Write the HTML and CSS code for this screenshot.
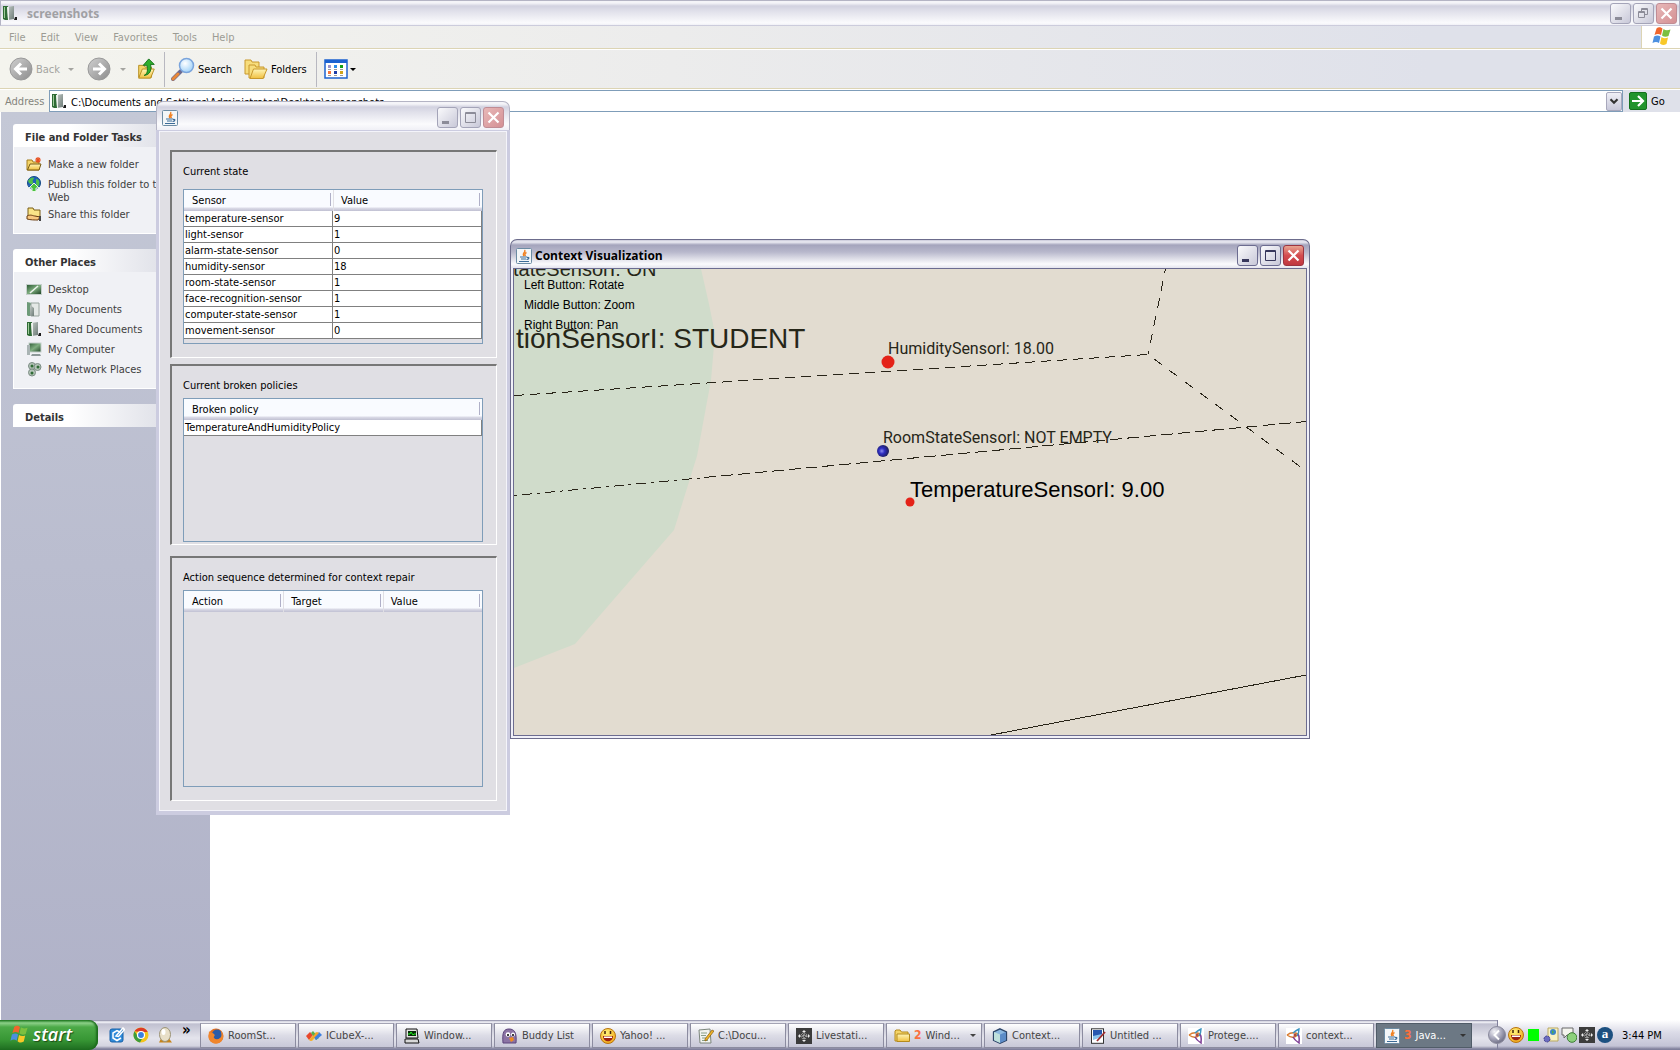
FILE: index.html
```html
<!DOCTYPE html>
<html lang="en">
<head>
<meta charset="utf-8">
<title>screenshots</title>
<link rel="stylesheet" href="styles.css">
</head>
<body>
<svg class="defs" aria-hidden="true">
  <defs>
    <linearGradient id="g-steel" x1="0" y1="0" x2="1" y2="1"><stop offset="0" stop-color="#c4ccc8"/><stop offset="1" stop-color="#6c7a76"/></linearGradient>
    <linearGradient id="g-green" x1="0" y1="0" x2="1" y2="1"><stop offset="0" stop-color="#2c5a34"/><stop offset=".5" stop-color="#7fae80"/><stop offset="1" stop-color="#1f4526"/></linearGradient>
    <linearGradient id="g-folder" x1="0" y1="0" x2="0" y2="1"><stop offset="0" stop-color="#fff6b8"/><stop offset="1" stop-color="#f0c040"/></linearGradient>
    <linearGradient id="g-gray" x1="0" y1="0" x2="1" y2="1"><stop offset="0" stop-color="#d0d0d0"/><stop offset="1" stop-color="#8c8c8c"/></linearGradient>
    <radialGradient id="g-lens" cx=".4" cy=".35" r=".7"><stop offset="0" stop-color="#ffffff"/><stop offset="1" stop-color="#9cd0f8"/></radialGradient>
    <radialGradient id="g-smile" cx=".4" cy=".3" r=".8"><stop offset="0" stop-color="#fff27a"/><stop offset="1" stop-color="#f0a010"/></radialGradient>
    <radialGradient id="g-ball" cx=".4" cy=".5" r=".6"><stop offset="0" stop-color="#8c8cf0"/><stop offset=".4" stop-color="#2e2ec0"/><stop offset="1" stop-color="#1c1c50"/></radialGradient>
    <radialGradient id="g-chev" cx=".35" cy=".3" r=".8"><stop offset="0" stop-color="#f4f4f8"/><stop offset=".5" stop-color="#a8a8bc"/><stop offset="1" stop-color="#606078"/></radialGradient>
  </defs>
  <symbol id="books" viewBox="0 0 16 16"><path d="M1 1h5v14H3l-2-1z" fill="#2f6b35"/><path d="M2 2h1v11H2z" fill="#9ecb9a"/><path d="M5 2l7-1v13l-6 1z" fill="url(#g-steel)"/><path d="M5 2l2 0v13H6z" fill="#eef2ee"/><path d="M13 12h2v3h-3z" fill="#1c1c1c"/></symbol>
  <symbol id="docs" viewBox="0 0 16 16"><path d="M1 1l5 1v13H2l-1-1z" fill="#6d9a78"/><path d="M5 2h8v13H5z" fill="#e4e8e6" stroke="#98a49e"/><path d="M4 4l4 3v8H4z" fill="url(#g-steel)"/></symbol>
  <symbol id="java" viewBox="0 0 16 16"><rect x=".5" y=".5" width="15" height="15" rx="1" fill="#f3f6f8" stroke="#6c8ca4"/><path d="M8.500 2c2 2-3 3-.5 6M10.500 4.500c-2 1-2 2-1 3.500" fill="none" stroke="#f08020" stroke-width="1.400"/><path d="M4 9h7M5 11h5M3 13.500h10M11 9.500c3-.5 2 2-.5 2" fill="none" stroke="#3c6c98" stroke-width="1.200"/></symbol>
  <symbol id="flag" viewBox="0 0 20 20"><path d="M4.500 2.500c3-2 4-1 6 0L9 9c-2-1.500-4-1.500-6.500 0z" fill="#f0662c"/><path d="M11.500 3c2 1.500 4 1.500 7 .5L16.500 10c-2 1-4.500 1-6.500-.5z" fill="#7cc040"/><path d="M2 10.500c2.500-1.500 4.500-1.500 6.500 0L7 17c-2-1.500-4-1.500-6.500 0z" fill="#4c90e0"/><path d="M9.500 11c2 1.500 4 1.500 6.500.5L14.500 18c-3 1.500-5 1-6.500-.5z" fill="#f8c828"/></symbol>
  <symbol id="folder" viewBox="0 0 16 16"><path d="M1 3l1-1h4l1.500 2H14v9H1z" fill="#f4d468" stroke="#b48a1c"/><path d="M3 6h12.500v7.500H3z" fill="url(#g-folder)" stroke="#b48a1c"/></symbol>
  <symbol id="newfolder" viewBox="0 0 16 16"><path d="M1 4h5l1 2h6v8H1z" fill="#f4d468" stroke="#a47c1c"/><path d="M1.500 14L4 8h11l-2 6z" fill="url(#g-folder)" stroke="#7a5c14"/><path d="M12 1v6M9 4h6M10 2l4 4M14 2l-4 4" stroke="#e85020" stroke-width="1.200"/></symbol>
  <symbol id="globe" viewBox="0 0 16 16"><circle cx="8" cy="7" r="6.500" fill="#2060b8" stroke="#134a86"/><path d="M2 5c2-4 6-4 6-3s-2 2-1 4-3 4-5-1zM10 3c3 0 4 3 3 6s-3 0-3-2z" fill="#4fc04a"/><path d="M8 7l5 5h-3v3.500H6V12H3z" fill="#4cc040" stroke="#e8f8e8"/></symbol>
  <symbol id="sharefolder" viewBox="0 0 16 16"><path d="M2 2h5l1 2h6v7H2z" fill="#f9e487" stroke="#7a5c14"/><path d="M1 10c4-2 6 0 8 0l5 1-2 3c-4 0-7 0-11-1z" fill="#f8c880" stroke="#6a3c10"/><path d="M13 10h2v5h-2z" fill="#444"/></symbol>
  <symbol id="desk" viewBox="0 0 16 16"><rect x="0" y="3" width="16" height="11" fill="#c6d0cc"/><rect x="1" y="4" width="14" height="9" fill="url(#g-green)"/><path d="M4 12l8-7" stroke="#eef4ee" stroke-width="1.500"/></symbol>
  <symbol id="pc" viewBox="0 0 16 16"><rect x="3" y="2" width="12" height="9" fill="url(#g-green)" stroke="#c4d0cc"/><path d="M1 4h3v10H1z" fill="#aab4b4"/><path d="M6 13h8l1 2H5z" fill="#8c9898"/></symbol>
  <symbol id="net" viewBox="0 0 16 16"><g stroke="#7c8c84" fill="#b4c4b8"><circle cx="6" cy="5" r="3.500"/><circle cx="11.500" cy="6" r="3.500"/><circle cx="6" cy="11.500" r="3.500"/></g><circle cx="6" cy="5" r="1.500" fill="#2f6b35"/><circle cx="12" cy="6" r="1.500" fill="#2f6b35"/><circle cx="6" cy="12" r="1.500" fill="#2f6b35"/></symbol>
  <symbol id="back" viewBox="0 0 24 24"><circle cx="12" cy="12" r="11" fill="url(#g-gray)" stroke="#9a9a9a"/><path d="M18 12H7M12 6.500L6.500 12l5.500 5.500" fill="none" stroke="#fff" stroke-width="3"/></symbol>
  <symbol id="fwd" viewBox="0 0 24 24"><circle cx="12" cy="12" r="11" fill="url(#g-gray)" stroke="#9a9a9a"/><path d="M6 12h11M12 6.500l5.500 5.500-5.500 5.500" fill="none" stroke="#fff" stroke-width="3"/></symbol>
  <symbol id="up" viewBox="0 0 20 24"><path d="M2 8h6l1 2h7v11H2z" fill="#f4d468" stroke="#b48a1c"/><path d="M2 22l4-10h13l-4 10z" fill="url(#g-folder)" stroke="#b48a1c"/><path d="M8 19c4-2 4-6 3-11H7l6-7 6 6h-4c1 6 0 11-7 12z" fill="#2fae2c" stroke="#14701a"/></symbol>
  <symbol id="lens" viewBox="0 0 24 24"><path d="M2 22l8-8" stroke="#6a6a90" stroke-width="4" stroke-linecap="round"/><path d="M2 22l5-5" stroke="#e88838" stroke-width="3" stroke-linecap="round"/><circle cx="15.500" cy="8.500" r="7" fill="url(#g-lens)" stroke="#7aa4dc" stroke-width="1.500"/></symbol>
  <symbol id="folders" viewBox="0 0 24 22"><path d="M1 2h6l1 2h7v12H1z" fill="#f7dd7c" stroke="#c8982c"/><path d="M5 7h6l1 2h8v11H5z" fill="#f7dd7c" stroke="#c8982c"/><path d="M6 20.500L9.500 11H23l-4 9.500z" fill="url(#g-folder)" stroke="#c8982c"/></symbol>
  <symbol id="views" viewBox="0 0 24 20"><rect x="1" y="1" width="22" height="18" fill="#fff" stroke="#1c62d0" stroke-width="1.500"/><path d="M1 1h22v3H1z" fill="#1c62d0"/><path d="M4 6h3v3H4z" fill="#9c94cc"/><path d="M10 6h3v3h-3z" fill="#2c8ce8"/><path d="M16 6h3v3h-3z" fill="#12a012"/><path d="M4 12h3v3H4z" fill="#f4743c"/><path d="M10 12h3v3h-3z" fill="#1c3ca8"/><path d="M16 12h3v3h-3z" fill="#d0a41c"/><path d="M4 10.500h3m3 0h3m3 0h3M4 16.500h3m3 0h3m3 0h3" stroke="#999"/></symbol>
  <symbol id="ie" viewBox="0 0 16 16"><rect x="1" y="2" width="13" height="13" rx="2" fill="#2f8ad8" stroke="#1660a8"/><path d="M11.500 5.500L8 3.500 4 6v5l4 2.500 4-2.500M7 9l7-8 1.500 1.500-6 7z" fill="none" stroke="#fff" stroke-width="1.500"/></symbol>
  <symbol id="chrome" viewBox="0 0 16 16"><circle cx="8" cy="8" r="7.500" fill="#f4c41c"/><path d="M1.500 4.200a7.500 7.500 0 0 1 13.200.8H8z" fill="#dc3a28"/><path d="M1.500 4.200a7.500 7.500 0 0 0 5.500 11.200L9.500 11 5 9.500z" fill="#3c9c3c"/><circle cx="8" cy="8" r="3.500" fill="#3a80e0" stroke="#fff" stroke-width="1.200"/></symbol>
  <symbol id="egg" viewBox="0 0 16 16"><path d="M2 15.500l2-4h8l3 4z" fill="#c88418"/><ellipse cx="8" cy="7.500" rx="5.500" ry="7" fill="#e8dfc8" stroke="#9c9478"/><ellipse cx="6.500" cy="5" rx="2" ry="3" fill="#fff"/></symbol>
  <symbol id="firefox" viewBox="0 0 16 16"><circle cx="8" cy="8" r="7.500" fill="#e8701c"/><circle cx="9" cy="6.500" r="5" fill="#2c5ca8"/><path d="M1 3c1 2 3 1 5 3s-1 2 0 4 5 2 7-1c1-2 0-5 0-6 3 3 3 9-1 11.500S1 15 .5 9z" fill="#f0862c"/></symbol>
  <symbol id="icube" viewBox="0 0 16 16"><path d="M0 8l4-4 3 3-4 5z" fill="#e8482c"/><path d="M3 12l7-8 3 2-7 7z" fill="#f4c42c"/><path d="M5 5l2-2 6 7-3 2z" fill="#58b04c"/><path d="M10 12l6-5-3-3-5 5z" fill="#3c80e0"/><path d="M3 12l8-8 2 1-8 8z" fill="#f4a42c"/></symbol>
  <symbol id="oldpc" viewBox="0 0 16 16"><path d="M2 1h11l1 9H2z" fill="#e4e4e4" stroke="#111"/><path d="M4 3h8v5H4z" fill="#0a2a0a"/><path d="M4 6h2l1-2 2 3 1-1h2" stroke="#20f020" fill="none"/><path d="M1 11h13l1 4H1z" fill="#d8d8d8" stroke="#111"/></symbol>
  <symbol id="bird" viewBox="0 0 16 16"><path d="M1 15C0 4 2 1 7 1s8 3 7 14z" fill="#8c74a4" stroke="#5c447c"/><circle cx="6" cy="6.500" r="2.300" fill="#fff"/><circle cx="11" cy="6.500" r="2" fill="#fff"/><circle cx="6" cy="7" r="1"/><circle cx="11" cy="7" r="1"/><path d="M7 10l4-1 1 3-3 2z" fill="#f08c20"/></symbol>
  <symbol id="smile" viewBox="0 0 16 16"><circle cx="8" cy="8" r="7.500" fill="url(#g-smile)" stroke="#b87410"/><path d="M3 8h10c0 7-10 7-10 0z" fill="#9c2010"/><path d="M4 8.500h8v1.500H4z" fill="#fff"/><path d="M5 3v3M10.500 3v3" stroke="#402008" stroke-width="1.500"/></symbol>
  <symbol id="note" viewBox="0 0 16 16"><path d="M1 2l11-1 1 14H2z" fill="#f2f4f0" stroke="#7c867c"/><path d="M3 5h6M3 7.500h5M4 10h5M4 12.500h6" stroke="#8aa08a"/><path d="M7 11l7-9 2 1-7 9-2 1z" fill="#f0b428" stroke="#865c10" stroke-width=".7"/></symbol>
  <symbol id="live" viewBox="0 0 16 16"><rect width="16" height="16" fill="#3c3c3c"/><circle cx="8" cy="8" r="3" fill="none" stroke="#ddd" stroke-dasharray="1 1"/><path d="M8 3v10M3 8h10" stroke="#ccc" stroke-dasharray="2 1"/><path d="M8 2l2 2H6zM8 14l2-2H6zM2 8l2-2v4zM14 8l-2-2v4z" fill="#eee"/></symbol>
  <symbol id="cube" viewBox="0 0 16 16"><path d="M8 .8l6.500 3v8.500L8 15.300l-6.500-3V3.800z" fill="#8cb8e0" stroke="#2c4468" stroke-width="1.300"/><path d="M2 4l6 2.500V15l-6-2.700z" fill="#bfe0dc"/><path d="M8 6.500L14 4v8.300L8 15z" fill="#5c8cc8"/></symbol>
  <symbol id="paint" viewBox="0 0 16 16"><rect x="1.500" y=".8" width="12" height="14.500" fill="#fff" stroke="#333"/><path d="M3 2h9v6l-9 2z" fill="#2858b0"/><path d="M3 8l9-2v3l-9 3z" fill="#8cc4ec"/><path d="M7 13l8-9" stroke="#a02c30" stroke-width="1.800"/></symbol>
  <symbol id="protege" viewBox="0 0 16 16"><rect width="16" height="16" fill="#fff"/><path d="M1 7C5 4 8 4 12 6M1 7c4 3 8 3 11-1" fill="none" stroke="#d87c30" stroke-width="1.400"/><path d="M12 6c2 3 1 6 1 9-3-2-5-4-6-6" fill="none" stroke="#7c3c94" stroke-width="1.500"/><path d="M7 5c2-2 4-3 6-4 0 2 0 4-2 7" fill="none" stroke="#3c94c0" stroke-width="1.400"/><circle cx="9" cy="7" r="1.500" fill="#b04c40"/></symbol>
  <symbol id="msgs" viewBox="0 0 16 16"><path d="M5 1h10v13H5z" fill="#f8f2c4" stroke="#b8a860"/><circle cx="10" cy="5" r="3" fill="#3c84c8"/><path d="M9 3l2 2-2 2z" fill="#4fb04a"/><circle cx="4" cy="12" r="3" fill="#6c6cc0" stroke="#40408c" stroke-dasharray="2 1"/></symbol>
  <symbol id="chat" viewBox="0 0 16 16"><path d="M1 1h11v7H6l-3 3V8H1z" fill="#f4f4ee" stroke="#686868"/><circle cx="11" cy="10.500" r="4.800" fill="#8cd07c" stroke="#3c7c34"/></symbol>
  <symbol id="chev" viewBox="0 0 18 18"><circle cx="9" cy="9" r="8.500" fill="url(#g-chev)" stroke="#8a8a9c"/><path d="M11 4.500L6.500 9l4.500 4.500" fill="none" stroke="#fff" stroke-width="2"/></symbol>
  <symbol id="go" viewBox="0 0 18 18"><rect x=".5" y=".5" width="17" height="17" rx="1.500" fill="#22942c" stroke="#14701c"/><path d="M3 9h10M9 4l5 5-5 5" fill="none" stroke="#fff" stroke-width="2.200"/></symbol>
  <symbol id="w-min" viewBox="0 0 21 21"><path d="M5 14h7v3H5z" fill="currentColor"/></symbol>
  <symbol id="w-max" viewBox="0 0 21 21"><path d="M5.500 5.500h10v10h-10zM5 6.500h11" fill="none" stroke="currentColor"/></symbol>
  <symbol id="w-rest" viewBox="0 0 21 21"><path d="M5.500 8.500h6v6h-6zM5 9.500h7M8.500 8V5.500h6v6H12M8 6.500h7" fill="none" stroke="currentColor"/></symbol>
  <symbol id="w-close" viewBox="0 0 21 21"><path d="M5.500 5.500l10 10m0-10l-10 10" stroke="#fff" stroke-width="2.200"/></symbol>
</svg>

<div class="desktop">
  <section class="explorer" aria-label="screenshots">
    <header class="titlebar titlebar-wide">
      <svg class="i16"><use href="#books"/></svg>
      <h1 class="title">screenshots</h1>
      <div class="winbtns">
        <button class="wb" aria-label="Minimize"><svg><use href="#w-min"/></svg></button>
        <button class="wb" aria-label="Restore"><svg><use href="#w-rest"/></svg></button>
        <button class="wb wb-close" aria-label="Close"><svg><use href="#w-close"/></svg></button>
      </div>
    </header>
    <nav class="menubar">
      <button>File</button><button>Edit</button><button>View</button><button>Favorites</button><button>Tools</button><button>Help</button>
      <span class="throbber"><svg><use href="#flag"/></svg></span>
    </nav>
    <div class="toolbar">
      <button class="tb tb-back off"><svg class="i24"><use href="#back"/></svg>Back<i class="caret"></i></button>
      <button class="tb tb-fwd off" aria-label="Forward"><svg class="i24"><use href="#fwd"/></svg><i class="caret"></i></button>
      <button class="tb tb-up" aria-label="Up"><svg class="i20"><use href="#up"/></svg></button>
      <span class="sep"></span>
      <button class="tb tb-search"><svg class="i24"><use href="#lens"/></svg>Search</button>
      <button class="tb tb-folders"><svg class="i24"><use href="#folders"/></svg>Folders</button>
      <span class="sep"></span>
      <button class="tb tb-views" aria-label="Views"><svg class="i24"><use href="#views"/></svg><i class="caret"></i></button>
    </div>
    <div class="addressbar">
      <label for="addr">Address</label>
      <div class="combo">
        <svg class="i16"><use href="#books"/></svg>
        <input id="addr" type="text" value="C:\Documents and Settings\Administrator\Desktop\screenshots">
        <button class="drop" aria-label="Show history"><svg viewBox="0 0 16 18"><path d="M4 7l4 4 4-4" fill="none" stroke="#333" stroke-width="2.500"/></svg></button>
      </div>
      <button class="go"><svg><use href="#go"/></svg>Go</button>
    </div>
    <main class="files">
      <aside class="tasks">
        <section class="box">
          <h2>File and Folder Tasks</h2>
          <ul>
            <li><svg class="i16"><use href="#newfolder"/></svg><a href="#">Make a new folder</a></li>
            <li><svg class="i16"><use href="#globe"/></svg><a href="#">Publish this folder to the Web</a></li>
            <li><svg class="i16"><use href="#sharefolder"/></svg><a href="#">Share this folder</a></li>
          </ul>
        </section>
        <section class="box">
          <h2>Other Places</h2>
          <ul>
            <li><svg class="i16"><use href="#desk"/></svg><a href="#">Desktop</a></li>
            <li><svg class="i16"><use href="#docs"/></svg><a href="#">My Documents</a></li>
            <li><svg class="i16"><use href="#books"/></svg><a href="#">Shared Documents</a></li>
            <li><svg class="i16"><use href="#pc"/></svg><a href="#">My Computer</a></li>
            <li><svg class="i16"><use href="#net"/></svg><a href="#">My Network Places</a></li>
          </ul>
        </section>
        <section class="box"><h2>Details</h2></section>
      </aside>
    </main>
  </section>

  <section class="window win-state" aria-label="Context state">
    <header class="titlebar">
      <svg class="i16"><use href="#java"/></svg>
      <div class="winbtns">
        <button class="wb" aria-label="Minimize"><svg><use href="#w-min"/></svg></button>
        <button class="wb" aria-label="Maximize"><svg><use href="#w-max"/></svg></button>
        <button class="wb wb-close" aria-label="Close"><svg><use href="#w-close"/></svg></button>
      </div>
    </header>
    <div class="state-body">
      <section class="panel panel-state">
        <h2>Current state</h2>
        <div class="scroll">
          <table>
            <thead><tr><th>Sensor</th><th>Value</th></tr></thead>
            <tbody>
              <tr><td>temperature-sensor</td><td>9</td></tr>
              <tr><td>light-sensor</td><td>1</td></tr>
              <tr><td>alarm-state-sensor</td><td>0</td></tr>
              <tr><td>humidity-sensor</td><td>18</td></tr>
              <tr><td>room-state-sensor</td><td>1</td></tr>
              <tr><td>face-recognition-sensor</td><td>1</td></tr>
              <tr><td>computer-state-sensor</td><td>1</td></tr>
              <tr><td>movement-sensor</td><td>0</td></tr>
            </tbody>
          </table>
        </div>
      </section>
      <section class="panel panel-broken">
        <h2>Current broken policies</h2>
        <div class="scroll">
          <table>
            <thead><tr><th>Broken policy</th></tr></thead>
            <tbody><tr><td>TemperatureAndHumidityPolicy</td></tr></tbody>
          </table>
        </div>
      </section>
      <section class="panel panel-actions">
        <h2>Action sequence determined for context repair</h2>
        <div class="scroll">
          <table>
            <thead><tr><th>Action</th><th>Target</th><th>Value</th></tr></thead>
          </table>
        </div>
      </section>
    </div>
  </section>

  <section class="window active win-viz" aria-label="Context Visualization">
    <header class="titlebar">
      <svg class="i16"><use href="#java"/></svg>
      <h1 class="title">Context Visualization</h1>
      <div class="winbtns">
        <button class="wb" aria-label="Minimize"><svg><use href="#w-min"/></svg></button>
        <button class="wb" aria-label="Maximize"><svg><use href="#w-max"/></svg></button>
        <button class="wb wb-close" aria-label="Close"><svg><use href="#w-close"/></svg></button>
      </div>
    </header>
    <div class="frame">
    <svg class="scene" viewBox="514 269 792 466">
      <path d="M514 269H701L709 304 715 334 711 380 697 456 674 530 575 644 514 668z" fill="#d0dccb"/>
      <g class="edges">
        <path d="M514 395.500L1148 354.500" stroke-dasharray="10 6"/>
        <path d="M1165.500 269L1148 354.500" stroke-dasharray="10 8" stroke-dashoffset="6"/>
        <path d="M1154 359L1306 471" stroke-dasharray="10 9"/>
        <path d="M514 495.500L700 478" stroke-dasharray="3 5 10 5"/>
        <path d="M704 477.500L1306 421.500" stroke-dasharray="12 5"/>
        <path d="M991 735L1306 675"/>
      </g>
      <g class="labels">
        <text class="t20" x="513" y="276">tateSensorI: ON</text>
        <text class="t28" x="516" y="348">tionSensorI: STUDENT</text>
        <text class="t16" x="888" y="354">HumiditySensorI: 18.00</text>
        <text class="t16" x="883" y="443">RoomStateSensorI: NOT EMPTY</text>
        <text class="t22" x="910" y="497">TemperatureSensorI: 9.00</text>
        <text class="hint" x="524" y="289">Left Button: Rotate</text>
        <text class="hint" x="524" y="309">Middle Button: Zoom</text>
        <text class="hint" x="524" y="329">Right Button: Pan</text>
      </g>
      <circle cx="888" cy="362" r="6.500" fill="#e42218"/>
      <circle cx="883" cy="451" r="6" fill="url(#g-ball)"/>
      <circle cx="910" cy="502" r="4.500" fill="#e42218"/>
    </svg>
    </div>
  </section>
</div>

<footer class="taskbar">
  <button class="start"><svg class="i20"><use href="#flag"/></svg>start</button>
  <div class="quick">
    <button aria-label="Internet Explorer"><svg class="i16"><use href="#ie"/></svg></button>
    <button aria-label="Chrome"><svg class="i16"><use href="#chrome"/></svg></button>
    <button aria-label="Egg"><svg class="i16"><use href="#egg"/></svg></button>
    <button class="more">»</button>
  </div>
  <div class="tasklist">
    <button class="task"><svg class="i16"><use href="#firefox"/></svg>RoomSt...</button>
    <button class="task"><svg class="i16"><use href="#icube"/></svg>ICubeX-...</button>
    <button class="task"><svg class="i16"><use href="#oldpc"/></svg>Window...</button>
    <button class="task"><svg class="i16"><use href="#bird"/></svg>Buddy List</button>
    <button class="task"><svg class="i16"><use href="#smile"/></svg>Yahoo! ...</button>
    <button class="task"><svg class="i16"><use href="#note"/></svg>C:\Docu...</button>
    <button class="task"><svg class="i16"><use href="#live"/></svg>Livestati...</button>
    <button class="task"><svg class="i16"><use href="#folder"/></svg><b>2</b>Wind...<i class="caret"></i></button>
    <button class="task"><svg class="i16"><use href="#cube"/></svg>Context...</button>
    <button class="task"><svg class="i16"><use href="#paint"/></svg>Untitled ...</button>
    <button class="task"><svg class="i16"><use href="#protege"/></svg>Protege....</button>
    <button class="task"><svg class="i16"><use href="#protege"/></svg>context...</button>
    <button class="task pressed"><svg class="i16"><use href="#java"/></svg><b>3</b>Java...<i class="caret"></i></button>
  </div>
  <div class="tray">
    <button class="hide" aria-label="Show hidden icons"><svg><use href="#chev"/></svg></button>
    <svg class="i16"><use href="#smile"/></svg>
    <span class="lamp"></span>
    <svg class="i16"><use href="#msgs"/></svg>
    <svg class="i16"><use href="#chat"/></svg>
    <svg class="i16"><use href="#live"/></svg>
    <span class="a-icon">a</span>
    <time>3:44 PM</time>
  </div>
</footer>
</body>
</html>
```
FILE: styles.css
```css
* { box-sizing: border-box; }
body {
  margin: 0;
  height: 100vh;
  display: flex;
  flex-direction: column;
  overflow: hidden;
  font: 11px/13px "DejaVu Sans Condensed", Roboto, sans-serif;
  color: #000;
  background: #fff;
}
h1, h2, ul { margin: 0; padding: 0; font: inherit; list-style: none; }
button { font: inherit; color: inherit; margin: 0; padding: 0; border: 0; background: none; }
svg { display: block; flex: none; }
.defs { position: absolute; width: 0; height: 0; }
.i16 { width: 16px; height: 16px; }
.i20 { width: 20px; height: 22px; }
.i24 { width: 24px; height: 24px; }
.caret { border: 3px solid transparent; border-top-color: currentColor; border-bottom: 0; }

.desktop { position: relative; flex: 1; min-height: 0; display: flex; }
.explorer { flex: 1; display: flex; flex-direction: column; }

/* title bars */
.titlebar {
  display: flex;
  align-items: center;
  height: 29px;
  padding: 3px 5px 0;
  border: 1px solid #b4b4c4;
  border-bottom: 0;
  border-radius: 7px 7px 0 0;
  background: linear-gradient(#f4f4f8 0, #f4f4f8 2px, #d2d2e0 5px, #e0e0ea 10px, #fbfbfd 22px, #f0f0f6 100%);
}
.titlebar-wide { height: 26px; padding: 0 2px 0 1px; border-radius: 0; border-bottom: 1px solid #ccccdc; }
.title { font: bold 12px/16px "Open Sans", sans-serif; margin-left: 3px; }
.titlebar-wide .title { margin-left: 9px; padding-top: 2px; color: #a0a0a4; }
.winbtns { display: flex; gap: 2px; margin-left: auto; }
.wb {
  width: 21px;
  height: 21px;
  border: 1px solid #a4a4b8;
  border-radius: 3px;
  background: linear-gradient(135deg, #fafafc, #c8c8d8);
  color: #8c8c98;
}
.wb svg { width: 21px; height: 21px; margin: -1px; }
.wb-close { border-color: #c08c94; background: linear-gradient(135deg, #e8b8b8, #d49094); }
.active .titlebar {
  border-color: #6c6c8c;
  background: linear-gradient(#c8c8d8 0, #ececf4 2px, #a4a4bc 5px, #b8b8cc 12px, #fbfbfd 24px, #e4e4ee 100%);
}
.active .wb { border-color: #6c6c90; color: #38385c; }
.active .wb-close { border-color: #9c3440; background: linear-gradient(#e8a490, #d44c50 50%, #c03840); }

/* explorer chrome */
.menubar, .toolbar, .addressbar { display: flex; align-items: center; background: linear-gradient(90deg, #f4f4ee, #ececec 40%, #dfe1ea 85%); }
.menubar { height: 23px; border-bottom: 1px solid #dcd4b4; padding-left: 9px; gap: 15px; color: #9c9c94; }
.throbber { align-self: stretch; width: 39px; margin-left: auto; padding: 0 0 0 10px; background: #fff; border-left: 1px solid #dcd4b4; }
.throbber svg { width: 20px; height: 20px; }
.toolbar { height: 40px; border-top: 1px solid #fff; border-bottom: 1px solid #dcd4b4; padding-left: 9px; }
.tb { display: flex; align-items: center; gap: 4px; }
.off { color: #a4a4a0; }
.tb-back { width: 78px; gap: 3px; }
.tb-back .caret { margin-left: 5px; }
.tb-fwd { width: 49px; gap: 9px; }
.tb-up { width: 28px; }
.sep { width: 1px; height: 35px; background: #b8b8c0; }
.tb-search { margin-left: 6px; width: 73px; gap: 3px; }
.tb-folders { width: 72px; gap: 3px; }
.tb-views { margin-left: 7px; gap: 2px; }
.addressbar { height: 23px; border-top: 1px solid #fff; padding-left: 5px; color: #84847c; }
.addressbar label { width: 44px; }
.combo { flex: 1; display: flex; align-items: center; height: 22px; border: 1px solid #7f9db9; background: #fff; padding-left: 1px; }
.combo input { flex: 1; border: 0; padding: 2px 0 0; margin-left: 4px; font: inherit; color: #000; background: none; outline: 0; }
.drop { width: 16px; height: 19px; border: 1px solid #a8a8bc; border-radius: 2px; background: linear-gradient(#f0f0f6, #c8c8da); }
.drop svg { width: 14px; height: 16px; }
.go { display: flex; align-items: center; gap: 4px; width: 57px; padding-left: 6px; color: #000; }
.go svg { width: 18px; height: 18px; }

.files { flex: 1; background: #fff; padding-left: 1px; display: flex; }
.tasks { width: 209px; padding: 12px 12px 0; background: linear-gradient(#c4c8d6, #b0b2c8); display: flex; flex-direction: column; gap: 15px; }
.box h2 { height: 23px; padding: 8px 0 0 12px; font-weight: bold; line-height: 12px; color: #333; border-radius: 3px 3px 0 0; background: linear-gradient(90deg, #fff 30%, #d4d6e0); }
.box ul { background: #f0f1f5; border: 1px solid #fff; border-top: 0; padding: 9px 0 11px 12px; display: flex; flex-direction: column; gap: 4px; }
.box li { display: flex; gap: 6px; min-height: 16px; }
.box a { color: #404040; text-decoration: none; margin: 2px 0 -2px; max-width: 140px; }

/* floating windows */
.window { position: absolute; display: flex; flex-direction: column; }
.win-state { left: 156px; top: 101px; width: 354px; }
.win-viz { left: 510px; top: 239px; width: 800px; }
.state-body {
  padding: 19px 10px 10px 11px;
  background: #e0dfe4;
  border: solid #cccce0;
  border-width: 1px 3px 4px;
  box-shadow: inset 0 0 0 1px #f4f4fa;
  display: flex;
  flex-direction: column;
}
.panel { border: 2px solid; border-color: #777 #fff #fff #777; border-right-width: 1px; border-bottom-width: 1px; padding: 13px 13px 0 11px; }
.panel h2 { line-height: 13px; margin-bottom: 6px; }
.panel-state h2 { margin-bottom: 11px; }
.panel-state { height: 208px; margin-bottom: 6px; }
.panel-broken { height: 181px; margin-bottom: 11px; }
.panel-actions { height: 245px; }
.scroll { border: 1px solid #7f9db9; }
.panel-state .scroll { height: 155px; }
.panel-broken .scroll { height: 144px; }
.panel-actions .scroll { height: 197px; }
table { width: 100%; border-spacing: 0; table-layout: fixed; }
th {
  height: 21px;
  padding: 0 0 0 8px;
  font-weight: normal;
  text-align: left;
  background: linear-gradient(#b0b0c8, #b0b0c8) right 2px top 3px / 1px 13px no-repeat, linear-gradient(#f9fbff 17px, #dcdce8 18px, #c0c0d2);
}
th + th { border-left: 1px solid #e0dfe4; padding-left: 7px; }
td { height: 16px; padding: 0 1px; line-height: 13px; background: #fff; border: solid #808080; border-width: 0 1px 1px 0; }

.frame { padding: 0 2px 2px; background: #f0f0f8; border: 1px solid #6c6c8c; border-top: 0; }
.scene { width: 100%; background: #e2dcd0; border: 1px solid #6c6c90; }
.edges { fill: none; stroke: #282418; stroke-width: 1; shape-rendering: crispEdges; }
.labels { font-family: "Liberation Sans", Arial, sans-serif; fill: #262618; }
.t16 { font-family: Roboto, "Liberation Sans", sans-serif; font-size: 16px; }
.t20 { font-size: 20px; }
.t22 { font-size: 22px; fill: #000; }
.t28 { font-size: 28px; }
.hint { font-size: 12px; fill: #000; }

/* taskbar */
.taskbar { height: 30px; display: flex; background: linear-gradient(#80809c 0, #f8f8fc 2px, #c0c0d0 4px, #e4e4ec 60%, #d4d4e0 26px, #80809c 29px); }
.start {
  width: 98px;
  display: flex;
  align-items: center;
  gap: 4px;
  padding: 0 0 2px 10px;
  border-radius: 0 9px 9px 0;
  color: #fff;
  font: italic 600 18px/20px "Open Sans", sans-serif;
  text-shadow: 1px 1px 1px #1c4c18;
  background: linear-gradient(#1e7a20 0, #8cd088 3px, #4caa48 7px, #379634 20px, #1e6c20);
  box-shadow: inset -2px 0 2px #1c6c1c;
}
.start svg { width: 19px; height: 20px; }
.quick { width: 102px; display: flex; align-items: center; gap: 8px; padding-left: 11px; }
.quick .more { font-size: 15px; font-weight: bold; align-self: flex-start; margin: 4px 0 0 1px; }
.tasklist { flex: 1; min-width: 0; display: flex; gap: 2px; padding: 3px 0 2px; }
.task {
  width: 96px;
  display: flex;
  align-items: center;
  gap: 4px;
  padding: 0 5px 0 7px;
  color: #444;
  border: 1px solid #8c8ca0;
  border-top-color: #a4a4b4;
  background: linear-gradient(#fff, #dcdce6 50%, #c8c8d8);
}
.task b { color: #fa7040; font-size: 12px; }
.task .caret { margin-left: auto; }
.pressed { color: #fff; background: #6c7884; border-color: #505c68; }
.pressed .caret { color: #333; }
.tray { width: 183px; display: flex; align-items: center; gap: 2px; border-left: 1px solid #80809c; background: linear-gradient(#fff, #dcdce8 40%, #c4c4d6 26px, #80809c 29px); }
.hide { margin-left: -10px; }
.hide svg { width: 18px; height: 18px; }
.lamp { width: 11px; height: 12px; margin: 0 2px; background: #0f0; }
.a-icon { width: 16px; height: 16px; border-radius: 50%; background: #1c5080; color: #fff; font: bold 13px/13px "Liberation Serif", serif; text-align: center; }
time { margin-left: 7px; white-space: nowrap; }
```
